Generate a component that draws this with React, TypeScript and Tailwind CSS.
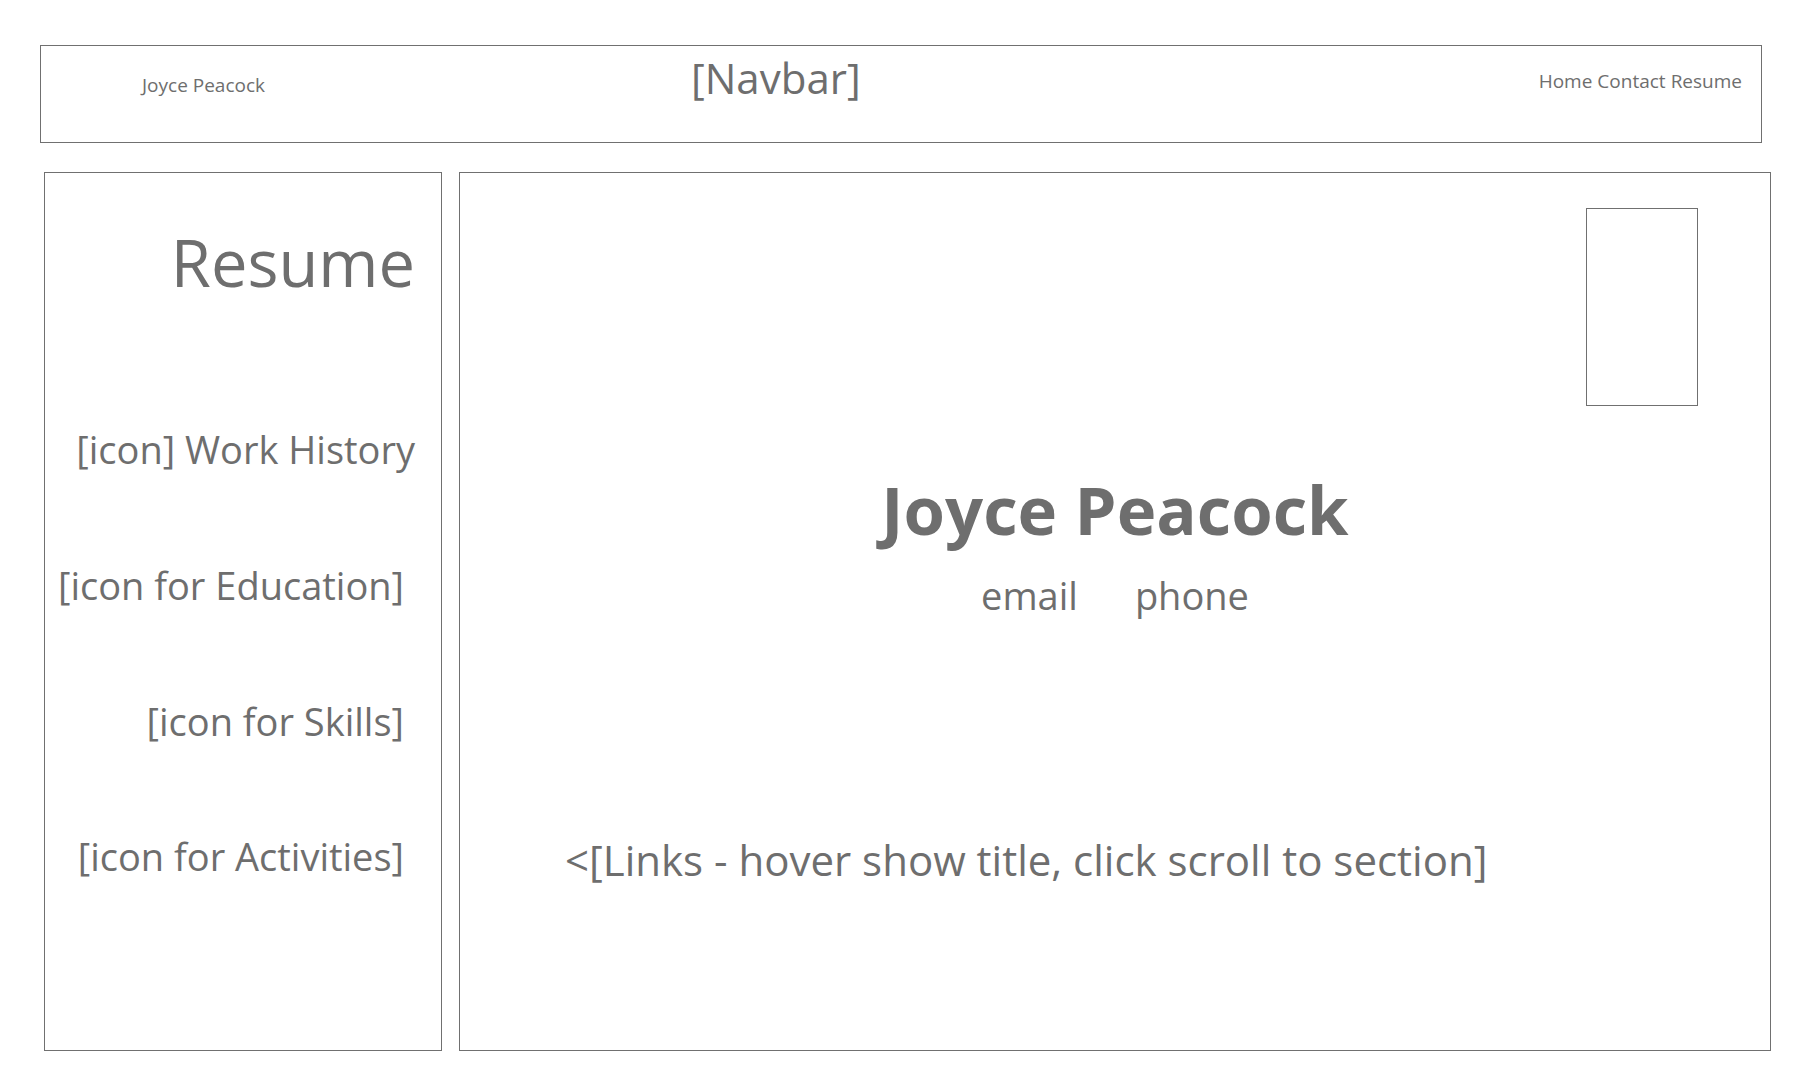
export default function App() {
  const font = { fontFamily: '"Open Sans", "Noto Sans", sans-serif' };

  return (
    <div className="w-[1800px] h-[1080px] bg-white text-[#6e6e6e] overflow-hidden" style={font}>
      {/* Navbar */}
      <header className="ml-[40px] mt-[45px] w-[1722px] h-[98px] border border-[#707070] flex items-start">
        <div className="pl-[101px] pt-[30px] text-[19px] leading-none w-[650px]">Joyce Peacock</div>
        <div className="pt-[11px] text-[42px] leading-none">[Navbar]</div>
        <nav className="ml-auto pr-[19px] pt-[26px] text-[19px] leading-none flex gap-[5px]">
          <span>Home</span>
          <span>Contact</span>
          <span>Resume</span>
        </nav>
      </header>

      <div className="flex mt-[29px]">
        {/* Sidebar */}
        <aside className="ml-[44px] w-[398px] h-[879px] border border-[#707070] flex flex-col text-right">
          <h1 className="pt-[57px] pr-[26px] text-[65px] leading-none font-normal">Resume</h1>
          <div className="pt-[135px] pr-[26px] text-[38px] leading-none">[icon] Work History</div>
          <div className="pt-[98px] pr-[37px] text-[38px] leading-none">[icon for Education]</div>
          <div className="pt-[98px] pr-[37px] text-[38px] leading-none">[icon for Skills]</div>
          <div className="pt-[97px] pr-[37px] text-[38px] leading-none">[icon for Activities]</div>
        </aside>

        {/* Main panel */}
        <main className="ml-[17px] w-[1312px] h-[879px] border border-[#707070] flex flex-col">
          <div className="flex justify-end pt-[35px] pr-[72px]">
            <div className="w-[112px] h-[198px] border border-[#707070]" />
          </div>
          <div className="pt-[70px] text-center text-[67px] leading-none font-bold">Joyce Peacock</div>
          <div className="pt-[33px] flex justify-center gap-[57px] text-[38px] leading-none">
            <span>email</span>
            <span>phone</span>
          </div>
          <div className="pt-[225px] pl-[105px] text-[42px] leading-none">
            &lt;[Links - hover show title, click scroll to section]
          </div>
        </main>
      </div>
    </div>
  );
}
